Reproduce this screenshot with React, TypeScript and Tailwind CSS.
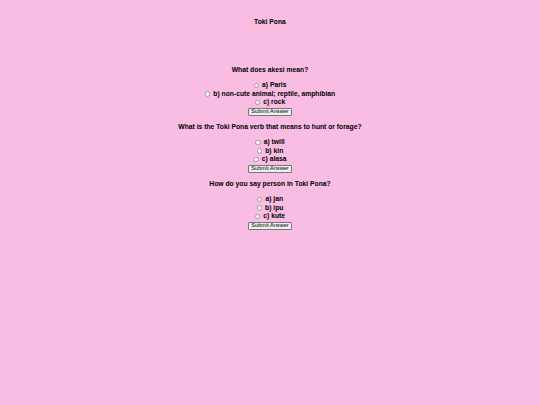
import { useState } from "react";

interface Question {
  id: string;
  text: string;
  options: string[];
}

const questions: Question[] = [
  { id: "q1", text: "What does akesi mean?", options: ["a) Paris", "b) non-cute animal; reptile, amphibian", "c) rock"] },
  { id: "q2", text: "What is the Toki Pona verb that means to hunt or forage?", options: ["a) twill", "b) kin", "c) alasa"] },
  { id: "q3", text: "How do you say person in Toki Pona?", options: ["a) jan", "b) ipu", "c) kute"] },
];

function Quiz({ q }: { q: Question }) {
  const [picked, setPicked] = useState("");
  return (
    <form onSubmit={(e) => e.preventDefault()} className="flex flex-col items-center">
      <p className="h-[8px] leading-[8px] font-bold">{q.text}</p>
      <div className="mt-[7px] flex flex-col items-center">
        {q.options.map((opt) => (
          <label key={opt} className="flex h-[8.5px] items-center gap-[2px] font-bold leading-[8.5px]">
            <span
              onClick={() => setPicked(opt)}
              className={
                "inline-block h-[5.5px] w-[5.5px] rounded-full border-[0.5px] border-[#9a9a9a] bg-white " +
                (picked === opt ? "ring-[1.5px] ring-inset ring-[#1a73e8]" : "")
              }
            />
            <span className="ml-[1px]">{opt}</span>
          </label>
        ))}
      </div>
      <button
        type="submit"
        className="mt-[1px] flex h-[8px] items-center rounded-[1px] border-[0.5px] border-[#767676] bg-[#efefef] px-[2.5px] text-[5.6px] leading-none text-black"
      >
        Submit Answer
      </button>
    </form>
  );
}

export default function App() {
  return (
    <div
      className="min-h-[405px] w-full bg-[#f9bde3] pt-[18px] text-center text-[6.75px] text-black"
      style={{ fontFamily: '"Liberation Sans", Arial, sans-serif' }}
    >
      <h1 className="h-[8px] leading-[8px] font-bold">Toki Pona</h1>
      <div className="mt-[40px] flex flex-col gap-[7.5px]">
        {questions.map((q) => (
          <Quiz key={q.id} q={q} />
        ))}
      </div>
    </div>
  );
}
